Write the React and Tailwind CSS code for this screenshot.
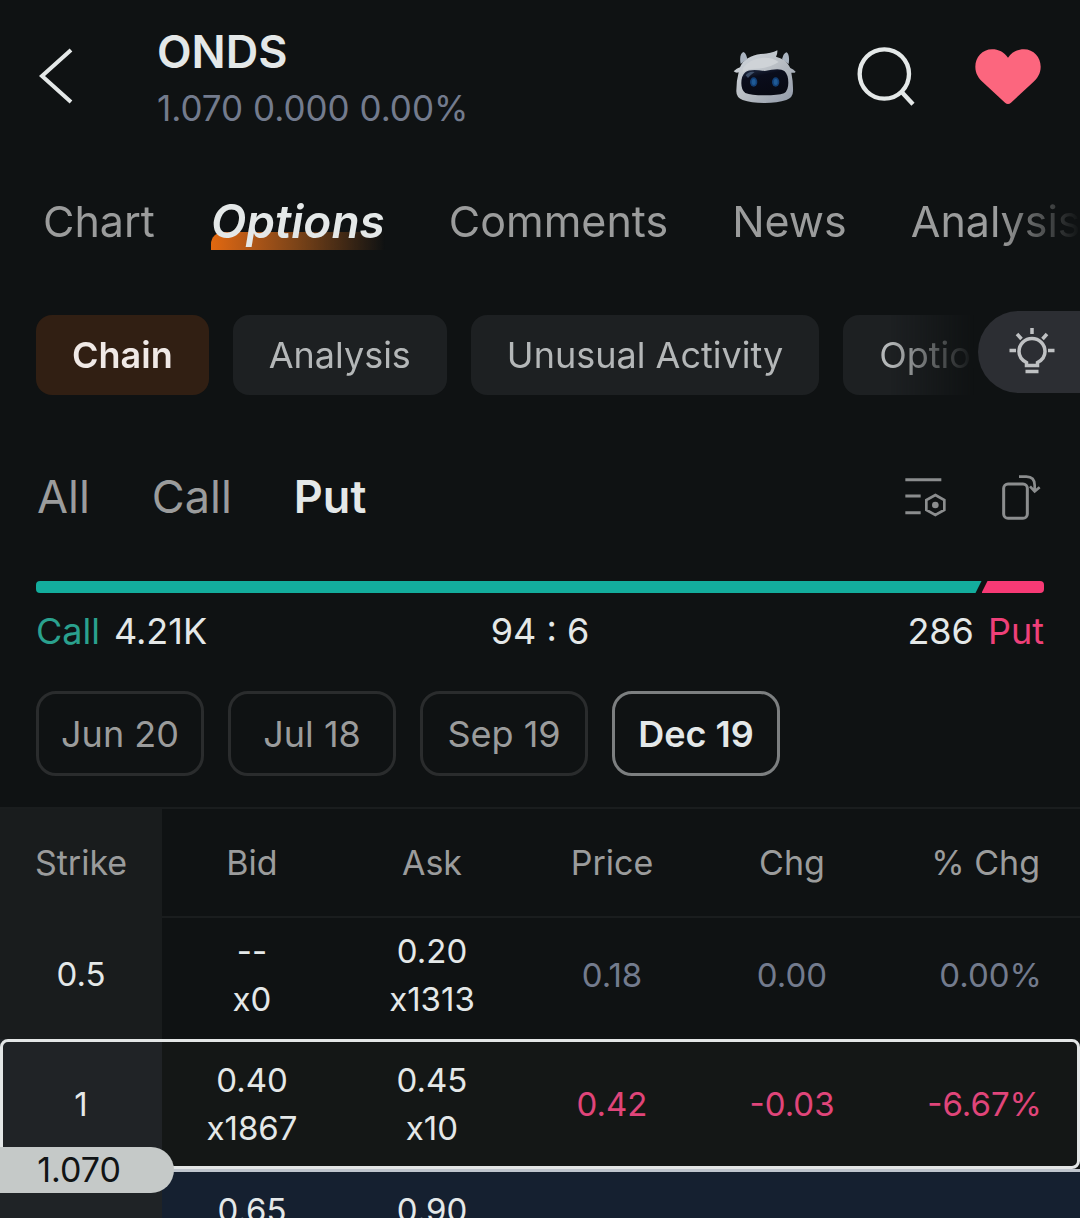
import React from "react";

const tabs = ["Chart", "Options", "Comments", "News", "Analysis"];
const chips = ["Chain", "Analysis", "Unusual Activity", "Options"];
const sides = ["All", "Call", "Put"];
const dates = ["Jun 20", "Jul 18", "Sep 19", "Dec 19"];

const BackIcon = () => (
  <svg viewBox="0 0 40 60" className="w-10 h-[60px]" fill="none" stroke="#e4e8e8" strokeWidth="4">
    <path d="M35 4 L6 30 L35 56" />
  </svg>
);

const RobotIcon = () => (
  <svg viewBox="95 80 192 171" className="w-16 h-[57px]">
    <defs>
      <linearGradient id="shell" x1="0" y1="0" x2="1" y2="1">
        <stop offset="0" stopColor="#d3d9df" />
        <stop offset="0.5" stopColor="#b9bec4" />
        <stop offset="1" stopColor="#8f98a8" />
      </linearGradient>
      <linearGradient id="visor" x1="0" y1="0" x2="0.4" y2="1">
        <stop offset="0" stopColor="#24304a" />
        <stop offset="0.35" stopColor="#0a0d1c" />
        <stop offset="1" stopColor="#080a14" />
      </linearGradient>
    </defs>
    <path
      d="M118 128 C114 108 118 94 127 92 C134 96 136 106 138 113 Z M262 128 C265 110 262 96 256 93 C246 96 245 106 242 114 Z"
      fill="#aab4c0"
    />
    <path
      d="M97 150 Q106 141 116 138 C124 116 150 101 178 98 Q208 97 228 87 Q229 98 224 106 Q240 110 251 118 Q262 128 267 140 Q276 143 283 151 Q280 156 270 154 Q276 184 275 210 Q275 229 255 236 Q228 245 190 245 Q150 245 124 236 Q104 229 105 208 Q105 178 112 153 Q104 156 97 150 Z"
      fill="url(#shell)"
    />
    <path d="M124 141 Q145 112 186 109 Q215 108 232 122 Q200 142 160 142 Q138 142 124 154 Z" fill="#cfd3d7" />
    <path
      d="M132 153 Q146 141 190 149 Q236 139 249 149 Q261 160 261 184 Q261 208 248 216 Q230 222 190 222 Q150 222 132 215 Q120 207 120 186 Q120 163 132 153 Z"
      fill="url(#visor)"
    />
    <path d="M133 162 Q142 149 160 152 Q148 160 140 170 Z" fill="#5c7391" opacity="0.6" />
    <ellipse cx="157" cy="182" rx="11" ry="14" fill="#123f76" />
    <ellipse cx="223" cy="182" rx="11" ry="14" fill="#123f76" />
    <ellipse cx="157" cy="182" rx="6" ry="9" fill="#1f5a96" />
    <ellipse cx="223" cy="182" rx="6" ry="9" fill="#1f5a96" />
  </svg>
);

const SearchIcon = () => (
  <svg viewBox="474 80 174 180" className="w-[58px] h-[60px]" fill="none" stroke="#e4e8e8" strokeWidth="13">
    <circle cx="556" cy="164" r="74" />
    <path d="M606 216 L642 255" />
  </svg>
);

const HeartIcon = () => (
  <svg viewBox="824 80 200 180" className="w-[66px] h-[60px]">
    <path
      d="M924 115 C912 97 895 89 876 89 C846 89 825 113 825 142 C825 163 835 177 848 189 L915 251 Q924 259 933 251 L1000 189 C1013 177 1023 163 1023 142 C1023 113 1002 89 972 89 C953 89 936 97 924 115 Z"
      fill="#fc667e"
    />
  </svg>
);

const BulbIcon = () => (
  <svg viewBox="0 0 48 48" className="w-12 h-12" fill="none" stroke="#bfc1c3" strokeWidth="3.5">
    <path d="M18.500 37.500 V34.500 C13.500 32 11 28 11 23.500 A13 13 0 0 1 37 23.500 C37 28 34.500 32 29.500 34.500 V37.500 Z" />
    <path d="M17.500 43.500 H30.500 M24 0 V6 M1.500 22.500 H8 M40 22.500 H46.500 M9 6 L13.500 11 M39 6 L34.500 11" />
  </svg>
);

const ListSettingsIcon = () => (
  <svg viewBox="77 80 126 126" className="w-[42px] h-[42px]" fill="none" stroke="#8b8d8e" strokeWidth="9">
    <path d="M78 91 H186 M78 140 H124 M78 190 H124" />
    <path d="M168 137 L195 152 V182 L168 197 L141 182 V152 Z" strokeWidth="8" />
    <circle cx="168" cy="167" r="10" fill="#8b8d8e" stroke="none" />
  </svg>
);

const RotateIcon = () => (
  <svg viewBox="366 70 120 138" className="w-10 h-[46px]" fill="none" stroke="#8b8d8e" strokeWidth="9">
    <rect x="374" y="100" width="71" height="103" rx="13" />
    <path d="M420 78 H442 Q467 78 467 104 V120 M453 107 L467 122 L482 110" strokeWidth="8" />
  </svg>
);

const rows = [
  {
    strike: "0.5",
    bid: ["--", "x0"],
    ask: ["0.20", "x1313"],
    price: "0.18",
    chg: "0.00",
    pct: "0.00%",
    color: "text-[#737b8d]",
    rowClass: "h-[122px]",
    cellPad: "pb-2",
    strikeBg: "bg-[#191c1d]",
  },
  {
    strike: "1",
    bid: ["0.40", "x1867"],
    ask: ["0.45", "x10"],
    price: "0.42",
    chg: "-0.03",
    pct: "-6.67%",
    color: "text-[#e0457a]",
    rowClass: "relative h-[130px] bg-[#141716]",
    cellPad: "",
    strikeBg: "bg-[#202326]",
    outlined: true,
  },
  {
    bid: ["0.65"],
    ask: ["0.90"],
    rowClass: "relative h-[130px] bg-[#152030]",
    cellPad: "pt-[17px] align-top",
    strikeBg: "bg-[#1f2326]",
    marker: "1.070",
  },
];

const Stack = ({ lines }) => lines.map((line) => <div key={line}>{line}</div>);

const OptionRow = ({ row }) => (
  <tr className={row.rowClass}>
    <th scope="row" className={`font-normal ${row.strikeBg} ${row.cellPad}`}>
      {row.strike}
      {row.outlined && (
        <span className="absolute inset-0 rounded-lg border-[3px] border-[#e3e6e6] pointer-events-none" />
      )}
      {row.marker && (
        <>
          <span className="absolute inset-x-0 top-0 h-[3px] bg-[#bfc5cd]" />
          <span className="absolute left-0 -top-[22px] w-[174px] h-[46px] pr-4 rounded-r-full bg-[#c5c9c8] text-[#111415] text-[34px] leading-[46px] text-center">
            {row.marker}
          </span>
        </>
      )}
    </th>
    <td className={row.cellPad}><Stack lines={row.bid} /></td>
    <td className={row.cellPad}><Stack lines={row.ask} /></td>
    <td className={`${row.cellPad} ${row.color || ""}`}>{row.price}</td>
    <td className={`${row.cellPad} ${row.color || ""}`}>{row.chg}</td>
    <td className={`${row.cellPad} ${row.color || ""} pr-[38px] text-right`}>{row.pct}</td>
  </tr>
);

const App = () => {
  return (
    <div className="h-screen overflow-hidden bg-[#0f1213] text-[#e4e8e8] font-['Inter','Liberation_Sans',sans-serif]">
      <header className="flex items-center pt-6 pl-9 pr-[39px]">
        <button aria-label="Back" className="mb-2"><BackIcon /></button>
        <div className="ml-[81px] flex-1">
          <h1 className="text-[45px] leading-[56px] font-semibold">ONDS</h1>
          <p className="text-[35px] leading-[56px] text-[#737b8d]">1.070 0.000 0.00%</p>
        </div>
        <div className="mb-2 flex items-center gap-[60px]">
          <button aria-label="Assistant"><RobotIcon /></button>
          <button aria-label="Search"><SearchIcon /></button>
          <button aria-label="Favorite"><HeartIcon /></button>
        </div>
      </header>

      <nav className="mt-14 flex gap-16 overflow-hidden pl-[43px] text-[43px] leading-[58px] text-[#9b9c9c] mask-r-from-[calc(100%-80px)] mask-r-to-[100%]">
        {tabs.map((tab) =>
          tab === "Options" ? (
            <a key={tab} href="#options" className="relative isolate -ml-2 text-[46px] italic font-semibold text-[#e4e8e8]">
              <span className="absolute inset-x-0 bottom-0 -z-10 h-[18px] rounded-tl-xl bg-linear-to-r from-[#e2680f] via-[#7a4318] to-transparent" />
              {tab}
            </a>
          ) : (
            <a key={tab} href={`#${tab.toLowerCase()}`}>{tab}</a>
          )
        )}
      </nav>

      <div className="relative mt-[65px]">
        <div className="flex gap-6 overflow-hidden pl-9 text-[36px] leading-[80px] text-[#b4b7b8] mask-r-from-[calc(100%-190px)] mask-r-to-[calc(100%-106px)]">
          {chips.map((chip) => (
            <button
              key={chip}
              className={
                chip === "Chain"
                  ? "shrink-0 h-20 rounded-2xl px-9 bg-[#311f13] font-semibold text-[#f0e9e6]"
                  : "shrink-0 h-20 rounded-2xl px-9 bg-[#1d2022]"
              }
            >
              {chip}
            </button>
          ))}
        </div>
        <button
          aria-label="Tips"
          className="absolute right-0 -top-1 flex h-[82px] w-[102px] items-center rounded-l-full bg-[#2c2e33] pl-[30px]"
        >
          <BulbIcon />
        </button>
      </div>

      <div className="mt-[74px] flex items-center pl-[37px] pr-[39px]">
        <div className="flex gap-[62px] text-[45px] leading-[56px] text-[#9b9c9c]">
          {sides.map((side) => (
            <button key={side} className={side === "Put" ? "font-semibold text-[#e4e8e8]" : ""}>
              {side}
            </button>
          ))}
        </div>
        <div className="ml-auto flex items-center gap-[54px]">
          <button aria-label="List settings"><ListSettingsIcon /></button>
          <button aria-label="Rotate"><RotateIcon /></button>
        </div>
      </div>

      <section className="mt-14 px-9">
        <div className="flex h-3 overflow-hidden rounded-sm">
          <div className="flex-1 bg-[#13ad9d] [clip-path:polygon(0_0,100%_0,calc(100%-6px)_100%,0_100%)]" />
          <div className="w-[6.2%] bg-[#f73a75] [clip-path:polygon(6px_0,100%_0,100%_100%,0_100%)]" />
        </div>
        <div className="mt-3.5 grid grid-cols-3 text-[36px] leading-[48px]">
          <p className="flex gap-3.5">
            <span className="text-[#2aa18e]">Call</span>
            <span>4.21K</span>
          </p>
          <p className="text-center">94 : 6</p>
          <p className="flex justify-end gap-3.5">
            <span>286</span>
            <span className="text-[#ee4079]">Put</span>
          </p>
        </div>
      </section>

      <div className="mt-9 flex gap-6 px-9 text-[36px] text-[#9b9c9c]">
        {dates.map((date) => (
          <button
            key={date}
            className={
              date === "Dec 19"
                ? "h-[85px] w-[168px] rounded-[20px] border-[3px] border-[#7c7f80] font-semibold text-[#e4e8e8]"
                : "h-[85px] w-[168px] rounded-[20px] border-[3px] border-[#2a2c2d]"
            }
          >
            {date}
          </button>
        ))}
      </div>

      <table className="mt-[31px] w-full table-fixed border-t-2 border-[#1a1d1e] text-center text-[33px] leading-[48px]">
        <thead>
          <tr className="h-[109px] text-[34px] text-[#9b9c9c]">
            <th className="w-[15%] bg-[#191c1d] font-normal">Strike</th>
            <th className="w-1/6 border-b-2 border-[#1a1d1e] font-normal">Bid</th>
            <th className="w-1/6 border-b-2 border-[#1a1d1e] font-normal">Ask</th>
            <th className="w-1/6 border-b-2 border-[#1a1d1e] font-normal">Price</th>
            <th className="w-1/6 border-b-2 border-[#1a1d1e] font-normal">Chg</th>
            <th className="border-b-2 border-[#1a1d1e] pr-10 text-right font-normal">% Chg</th>
          </tr>
        </thead>
        <tbody>
          {rows.map((row) => (
            <OptionRow key={row.bid[0]} row={row} />
          ))}
        </tbody>
      </table>
    </div>
  );
};

export default App;
